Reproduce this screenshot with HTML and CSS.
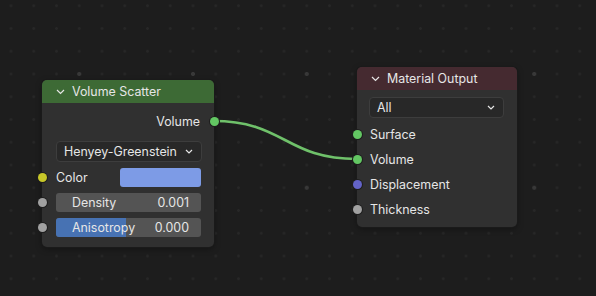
FILE: index.html
```html
<!DOCTYPE html>
<html>
<head>
  <meta charset="utf-8">
  <title>Shader Editor</title>
  <link rel="stylesheet" href="styles.css">
</head>
<body>
  <div class="editor">
    <svg class="links" width="596" height="296" viewBox="0 0 596 296">
      <path d="M213 121 C 285 121, 285 159, 357 159" fill="none" stroke="#6fc16a" stroke-width="2.6"/>
    </svg>

    <div class="node node-scatter">
      <div class="node-header">
        <svg class="chevron" width="9" height="6" viewBox="0 0 9 6"><path d="M1 1 L4.5 4.5 L8 1" fill="none" stroke="#e6e6e6" stroke-width="1.2"/></svg>
        <span>Volume Scatter</span>
      </div>
      <div class="node-body">
        <div class="row row-output">
          <span>Volume</span>
          <span class="socket socket-out sock-green"></span>
        </div>
        <div class="dropdown dropdown-wide">
          <span>Henyey-Greenstein</span>
          <svg class="chevron-sm" width="8" height="5" viewBox="0 0 8 5"><path d="M1 1 L4 4 L7 1" fill="none" stroke="#e6e6e6" stroke-width="1.2"/></svg>
        </div>
        <div class="row row-input">
          <span class="socket socket-in sock-yellow"></span>
          <span class="label">Color</span>
          <div class="swatch"></div>
        </div>
        <div class="row row-input">
          <span class="socket socket-in sock-grey"></span>
          <div class="slider">
            <span>Density</span>
            <span>0.001</span>
          </div>
        </div>
        <div class="row row-input">
          <span class="socket socket-in sock-grey"></span>
          <div class="slider">
            <div class="slider-fill" style="width: 48%"></div>
            <span>Anisotropy</span>
            <span>0.000</span>
          </div>
        </div>
      </div>
    </div>

    <div class="node node-output">
      <div class="node-header">
        <svg class="chevron" width="9" height="6" viewBox="0 0 9 6"><path d="M1 1 L4.5 4.5 L8 1" fill="none" stroke="#e6e6e6" stroke-width="1.2"/></svg>
        <span>Material Output</span>
      </div>
      <div class="node-body">
        <div class="dropdown">
          <span>All</span>
          <svg class="chevron-sm" width="8" height="5" viewBox="0 0 8 5"><path d="M1 1 L4 4 L7 1" fill="none" stroke="#e6e6e6" stroke-width="1.2"/></svg>
        </div>
        <div class="socket-list">
          <div class="row row-in-label"><span class="socket socket-in sock-green"></span>Surface</div>
          <div class="row row-in-label"><span class="socket socket-in sock-green"></span>Volume</div>
          <div class="row row-in-label"><span class="socket socket-in sock-blue"></span>Displacement</div>
          <div class="row row-in-label"><span class="socket socket-in sock-grey"></span>Thickness</div>
        </div>
      </div>
    </div>
  </div>
</body>
</html>
```

FILE: styles.css
```css
*, *::before, *::after {
  box-sizing: border-box;
  margin: 0;
  padding: 0;
}

body {
  font-family: Inter, "DejaVu Sans", sans-serif;
  font-size: 12.4px;
  color: #e6e6e6;
  background-color: #1d1d1d;
  overflow: hidden;
}

.editor {
  position: relative;
  width: 596px;
  height: 296px;
  background-color: #1d1d1d;
  background-image:
    radial-gradient(circle, #383838 0, #383838 1.6px, transparent 2.4px),
    radial-gradient(circle, #272727 0, #272727 1px, transparent 1.8px);
  background-size: 113.75px 113.75px, 22.75px 22.75px;
  background-position: 22.375px 17.125px, 22.375px 17.125px;
}

.links {
  position: absolute;
  left: 0;
  top: 0;
}

.node {
  position: absolute;
  background-color: #303030;
  border-radius: 5px;
  box-shadow: 0 0 0 1px #1a1a1a, 0 2px 6px rgba(0, 0, 0, 0.35);
}

.node-scatter {
  left: 42px;
  top: 80px;
  width: 172px;
  height: 167px;
}

.node-output {
  left: 357px;
  top: 67px;
  width: 160px;
  height: 160px;
}

.node-header {
  height: 23px;
  display: flex;
  align-items: center;
  gap: 7px;
  padding-left: 14px;
  border-radius: 5px 5px 0 0;
}

.node-scatter .node-header {
  background-color: #3d6a35;
}

.node-output .node-header {
  background-color: #452a30;
}

.node-scatter .node-body {
  padding: 8px 13px 0 14px;
}

.node-output .node-body {
  padding: 7px 13px 0 12px;
}

.row {
  position: relative;
  display: flex;
  align-items: center;
}

.row-output {
  height: 20px;
  justify-content: flex-end;
  padding-right: 1px;
}

.row-input {
  height: 19px;
  margin-top: 6px;
}

.row-input .label {
  width: 64px;
}

.socket {
  position: absolute;
  width: 9px;
  height: 9px;
  border-radius: 50%;
  top: 50%;
  margin-top: -4.5px;
  box-shadow: 0 0 0 1px #1e1e1e;
}

.socket-out {
  right: -18px;
}

.node-scatter .socket-in {
  left: -18.5px;
}

.node-output .socket-in {
  left: -16.5px;
}

.sock-green { background-color: #63c763; }
.sock-yellow { background-color: #c7c729; }
.sock-grey { background-color: #a1a1a1; }
.sock-blue { background-color: #6363c7; }

.dropdown {
  height: 21px;
  display: flex;
  align-items: center;
  justify-content: space-between;
  padding: 0 8px 0 7px;
  background-color: #282828;
  border: 1px solid #3d3d3d;
  border-radius: 4px;
}

.dropdown-wide {
  margin-top: 10px;
  margin-right: -1px;
}

.swatch {
  flex: 1;
  height: 19px;
  background-color: #7d9be6;
  border-radius: 3px;
}

.slider {
  position: relative;
  flex: 1;
  height: 19px;
  display: flex;
  align-items: center;
  justify-content: space-between;
  padding: 0 12px 0 16px;
  background-color: #545454;
  border-radius: 3px;
  overflow: hidden;
}

.slider span {
  position: relative;
}

.slider-fill {
  position: absolute;
  left: 0;
  top: 0;
  bottom: 0;
  background-color: #4772b3;
}

.socket-list {
  display: flex;
  flex-direction: column;
  gap: 5px;
  margin-top: 6px;
}

.row-in-label {
  height: 20px;
  padding-left: 1px;
}
```
